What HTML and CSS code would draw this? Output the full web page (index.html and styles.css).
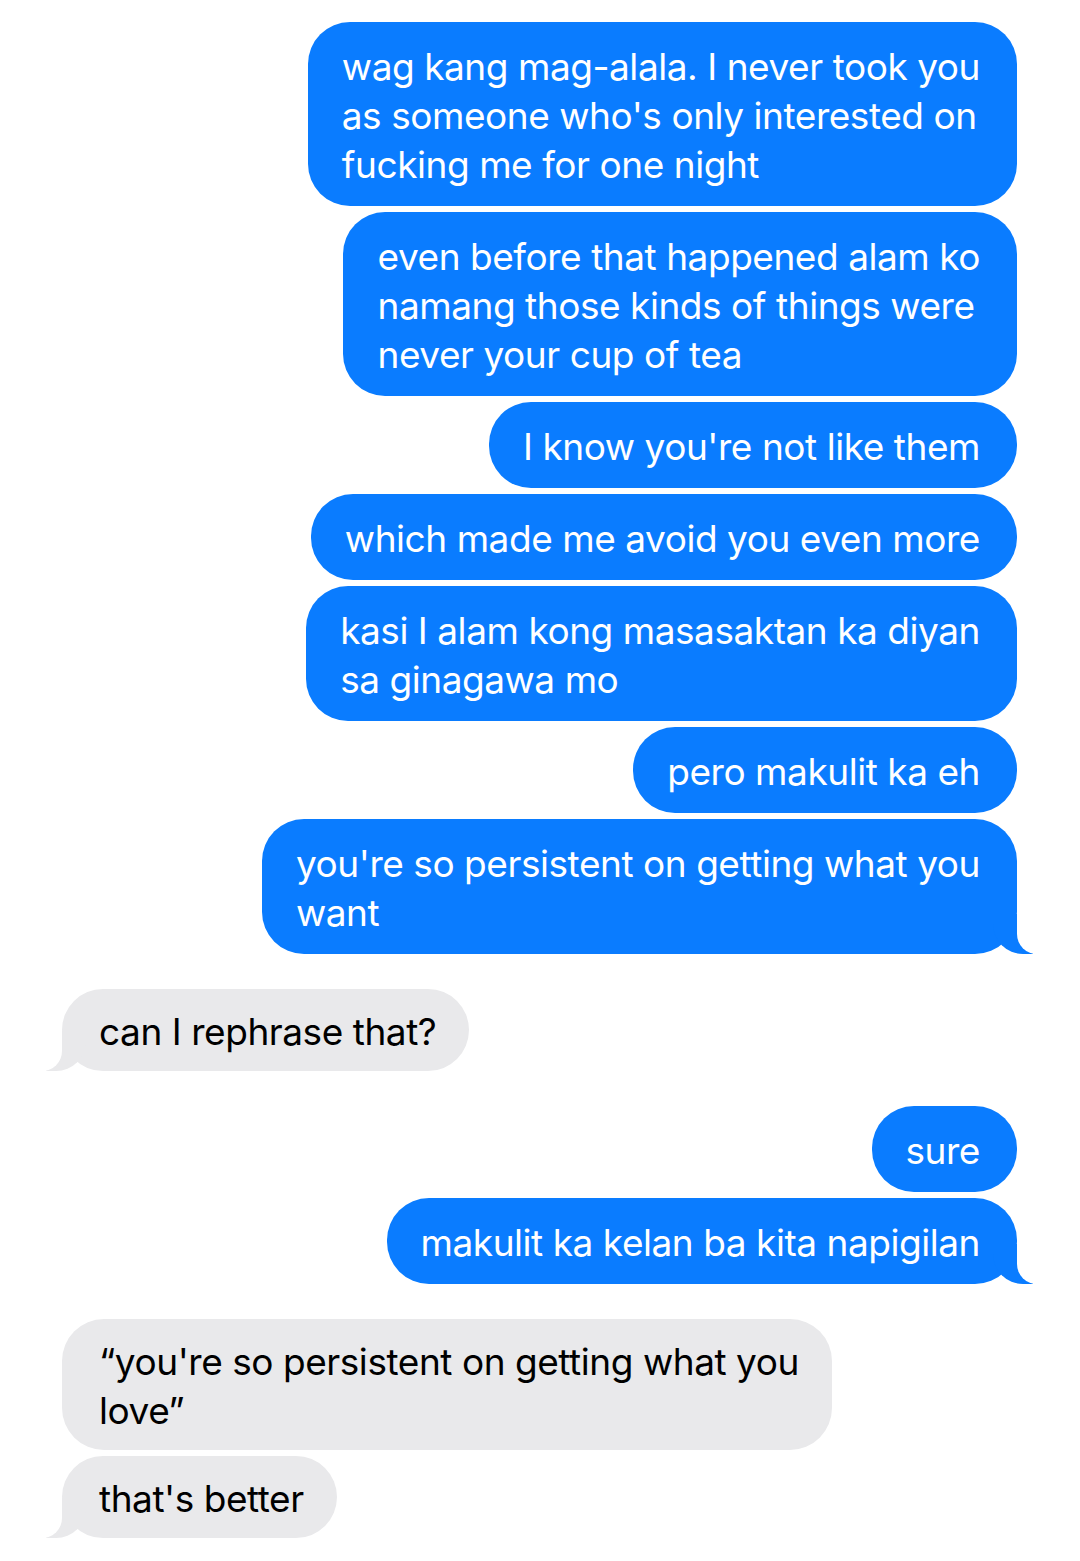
FILE: index.html
```html
<!DOCTYPE html>
<html lang="en">
<head>
<meta charset="utf-8">
<title>Messages</title>
<link rel="stylesheet" href="styles.css">
</head>
<body>
<main class="thread">
  <div class="group">
    <div class="bubble sent">wag kang mag-alala. I never took you<br>as someone who's only interested on<br>fucking me for one night</div>
    <div class="bubble sent">even before that happened alam ko<br>namang those kinds of things were<br>never your cup of tea</div>
    <div class="bubble sent">I know you're not like them</div>
    <div class="bubble sent">which made me avoid you even more</div>
    <div class="bubble sent">kasi I alam kong masasaktan ka diyan<br>sa ginagawa mo</div>
    <div class="bubble sent">pero makulit ka eh</div>
    <div class="bubble sent tail">you're so persistent on getting what you<br>want</div>
  </div>
  <div class="group">
    <div class="bubble received tail">can I rephrase that?</div>
  </div>
  <div class="group">
    <div class="bubble sent">sure</div>
    <div class="bubble sent tail">makulit ka kelan ba kita napigilan</div>
  </div>
  <div class="group">
    <div class="bubble received">“you're so persistent on getting what you<br>love”</div>
    <div class="bubble received tail">that's better</div>
  </div>
</main>
</body>
</html>
```
FILE: styles.css
```css
html, body {
  margin: 0;
  padding: 0;
  background: #ffffff;
}

body {
  font-family: Inter, "Noto Sans", "Liberation Sans", sans-serif;
  -webkit-font-smoothing: antialiased;
}

.thread {
  display: flex;
  flex-direction: column;
  gap: 35px;
  padding: 22px 63px 0 62px;
}

.group {
  display: flex;
  flex-direction: column;
  gap: 6px;
}

.bubble {
  position: relative;
  font-size: 37px;
  letter-spacing: -0.45px;
  line-height: 49px;
  border-radius: 42px;
  white-space: nowrap;
}

.sent {
  align-self: flex-end;
  background: #0a7cff;
  color: #ffffff;
  padding: 19.5px 37px 17.5px 34px;
}

.received {
  align-self: flex-start;
  background: #e9e9eb;
  color: #000000;
  padding: 17.5px 33px 15.5px 37px;
}

.tail::before,
.tail::after {
  content: "";
  position: absolute;
  bottom: 0;
  height: 40px;
}

.sent.tail::before {
  right: -16px;
  width: 40px;
  background: #0a7cff;
  border-bottom-left-radius: 30px;
  z-index: 0;
}

.sent.tail::after {
  right: -22px;
  width: 22px;
  background: #ffffff;
  border-bottom-left-radius: 20px;
  z-index: 1;
}

.received.tail::before {
  left: -16px;
  width: 40px;
  background: #e9e9eb;
  border-bottom-right-radius: 30px;
  z-index: 0;
}

.received.tail::after {
  left: -22px;
  width: 22px;
  background: #ffffff;
  border-bottom-right-radius: 20px;
  z-index: 1;
}
```
